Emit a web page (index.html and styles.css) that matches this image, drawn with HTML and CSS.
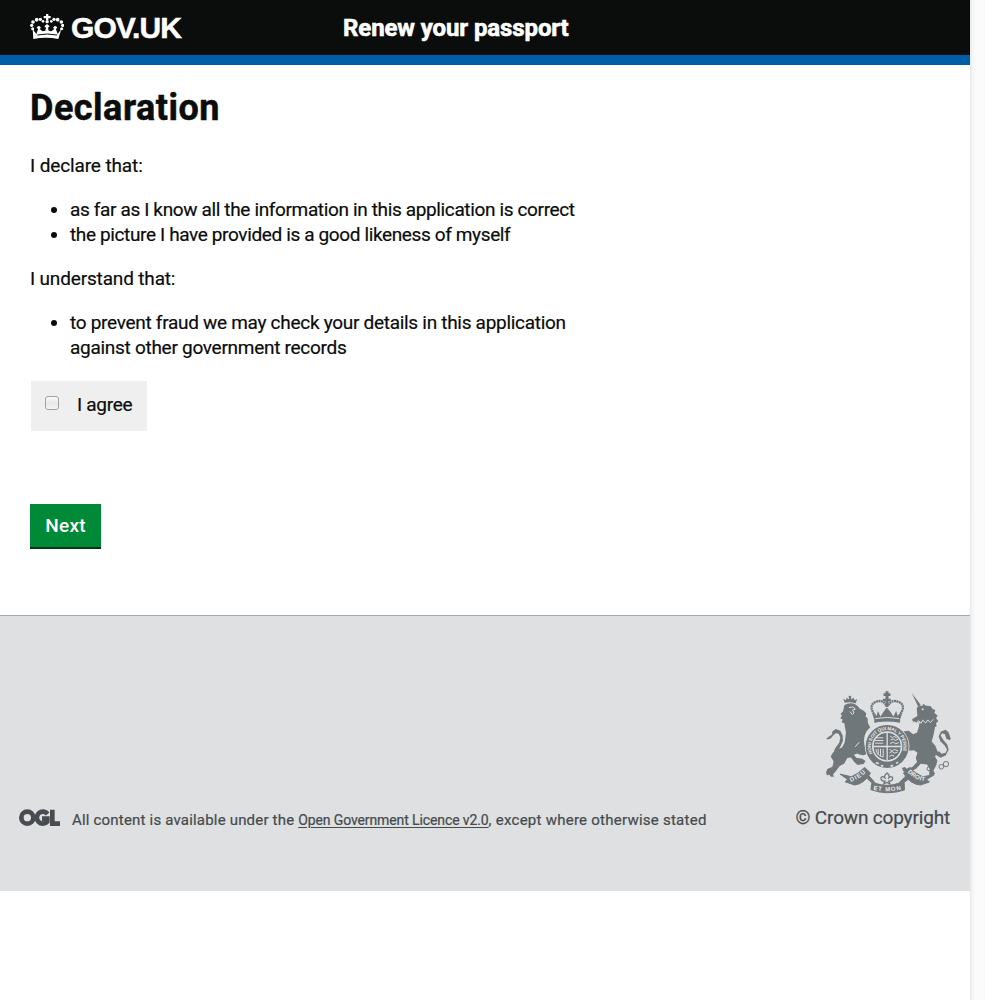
FILE: index.html
```html
<!DOCTYPE html>
<html lang="en">
<head>
<meta charset="utf-8">
<title>Declaration - Renew your passport - GOV.UK</title>
<link rel="stylesheet" href="styles.css">
</head>
<body>
<div class="window">
<div class="page">
  <header class="header">
    <a class="logo" href="#">
      <svg class="crown" viewBox="0 0 102 78" width="34" height="26" aria-hidden="true">
        <g fill="#fff">
          <path d="M48 0h7v6h7v7h-7v6h-7v-6h-7V6h7z"/>
          <circle cx="51.500" cy="23" r="5"/>
          <circle cx="20" cy="17" r="5.500"/><circle cx="31" cy="16" r="5"/><circle cx="39" cy="22" r="4"/>
          <circle cx="9" cy="24" r="5.500"/><circle cx="5" cy="34" r="5"/><circle cx="8" cy="44" r="4.500"/>
          <circle cx="83" cy="17" r="5.500"/><circle cx="72" cy="16" r="5"/><circle cx="64" cy="22" r="4"/>
          <circle cx="94" cy="24" r="5.500"/><circle cx="98" cy="34" r="5"/><circle cx="95" cy="44" r="4.500"/>
          <path d="M8 45l11 15 5-14-4-6 7-5 6 6-4 4 9 7 8-2 2-9-5-4 8-7 8 7-5 4 2 9 8 2 9-7-4-4 6-6 7 5-4 6 5 14 11-15-9 30q-38-8-75 0z"/>
        </g>
        <path d="M22 63q30-6 59 0" fill="none" stroke="#0b0c0c" stroke-width="3"/>
      </svg>
      <span class="wordmark">GOV.UK</span>
    </a>
    <span class="service">Renew your passport</span>
  </header>
  <main class="content">
    <h1 class="title">Declaration</h1>
    <p class="lead declare">I declare that:</p>
    <ul class="list">
      <li><span class="line l1">as far as I know all the information in this application is correct</span></li>
      <li><span class="line l2">the picture I have provided is a good likeness of myself</span></li>
    </ul>
    <p class="lead understand">I understand that:</p>
    <ul class="list">
      <li><span class="line l3">to prevent fraud we may check your details in this application</span><br><span class="line l4">against other government records</span></li>
    </ul>
    <label class="agree"><input class="box" type="checkbox"><span>I agree</span></label>
    <button class="next" type="button">Next</button>
  </main>
  <footer class="footer">
    <div class="licence">
      <svg class="ogl" viewBox="0 0 123 51" width="41" height="17" role="img" aria-label="OGL">
        <g fill="none" stroke="#484c50" stroke-width="14">
          <circle cx="25" cy="26" r="18"/>
          <path d="M86 15A18 18 0 1 0 85 38V29H69"/>
          <path d="M100 2v42h23"/>
        </g>
      </svg>
      <p class="terms"><span class="t1">All content is available under the </span><a href="#">Open Government Licence v2.0</a><span class="t3">, except where otherwise stated</span></p>
    </div>
    <div class="copyright">
      <svg class="crest" viewBox="30 33 380 310" width="127" height="103" aria-hidden="true">
        <defs>
          <path id="garter" d="M172 221A49 49 0 1 1 260 221"/>
          <path id="dieu" d="M106 307Q132 298 153 277"/>
          <path id="mon" d="M174 330Q216 339 260 330"/>
          <path id="droit" d="M277 277Q300 302 332 305"/>
        </defs>
        <g fill="#6f777b" stroke="none">
          <!-- lion -->
          <path d="M88 68l-4-12 8 5 2-8 6 5 4-7 5 7 6-5 3 8 8-4-5 13q-16-5-33-2z"/>
          <circle cx="104" cy="51" r="4"/>
          <path d="M87 76q10-8 30-5l10 7 6 8 11 6 9 8-2 10 6 4 1 15 7 14q-15 12-18 31-3 26 10 46l-11 6q-14 0-20-5l-10 4 7 9 18 3 10 7-6 9-18 3-10-9-10-14-11 2-9 16-14 8-10 13-10 12 3 7h-9l-6-7-6 3-3-9 4-10 15-7 4-16-9-15 7-12 13-9 14-6 8-14 4-30-5-29-8-2 3-9-7-3 5-10-5-4 8-7z"/>
          <path d="M33 176l17-12 1-9 10-8 14 6 7 14 1 16-8 18-8 14q0 14 11 13l12-10 7 8-12 14-16 4-12-8-3-14 5-16 13-18 3-15-5-11-9-2-7 6-8 10-10 3z"/>
          <!-- unicorn -->
          <path d="M290 39l27 36-8 5z"/>
          <path d="M305 84l7-7 9 1 5-7 5 6 16 2 6 8 8 3-3 9 10 8-5 7 7 10-7 5 2 10-5 2-4 22-6 22 11 13 7 18-8 14 7 12-3 14-9 17 5 9-8 8-10-6 2-16-8-14-19-2-14 15-20 10-18-2-5-10 9-3 6 5 17-5 14-15-4-12 5-16-10-8-20 2-11-10 14-2-4-11-17-5-8-17 13-13 17-2 13 10 12-5 5-16 2-11 3-8-11 6-11-3-3-8 16-10z"/>
          <path d="M405 181l-11-4-4-14-8-3-5 7 9 15 11 12 4 16-9 17-15 7-13-8-4-8 12-4 8 8 12-3 4-10-7-12-13-13-5-15 7-14 14-5 9 8 6 18z"/>
          <!-- crown -->
          <path d="M211 34h9v6h6v8h-6v8h7v8h-7v17h-9V64h-8v-8h8v-8h-6v-8h6zM171 101l13 8 4-16 8 17 10-16 9-11 10 12 10 15 8-17 5 16 13-8-9 26q-35-8-72 0z"/>
        </g>
        <!-- scrolls -->
        <g fill="#6f777b" stroke="#6f777b" stroke-width="3" stroke-linejoin="round">
          <path d="M74 283l34 8q22-9 40-28l18 17q-20 33-48 36l-29-10 8-7z"/>
          <path d="M357 285l-34 6q-22-9-40-28l-18 17q20 34 51 36l27-9-8-8z"/>
          <path d="M159 286l22 25q34 12 69 0l25-25 4 13-12 9 1 23q-52 17-101-1l3-21-13-11z"/>
        </g>
        <g fill="none" stroke="#6f777b">
          <path d="M181 109Q157 77 181 66Q204 57 213 77M251 109Q276 77 251 66Q228 57 219 77" stroke-width="7" stroke-dasharray="6 1.500"/>
          <path d="M177 125q40-7 78 0" stroke-width="7"/>
          <circle cx="344" cy="244" r="6" stroke-width="3"/><circle cx="352" cy="257" r="6" stroke-width="3"/><circle cx="342" cy="267" r="6" stroke-width="3"/><circle cx="379" cy="261" r="7" stroke-width="3"/><circle cx="393" cy="253" r="8" stroke-width="3"/>
        </g>
        <circle cx="216" cy="200" r="67" fill="#dee0e2"/>
        <circle cx="216" cy="200" r="55" fill="none" stroke="#6f777b" stroke-width="19"/>
        <circle cx="216" cy="200" r="42" fill="#6f777b"/>
        <g fill="none" stroke="#dee0e2" stroke-width="3">
          <circle cx="216" cy="200" r="43"/>
          <path d="M216 158v83M174 200h84" stroke-width="4"/>
          <path d="M184 174h20M180 182h25M180 190h24M225 169l7 5 5-5 8 6M226 181l8-4 6 5 9-4M225 191l9-4 8 5 9-4M182 208q4 20 22 24M189 207v18M196 207v22M204 207v25M223 209l8 5 6-5 12 4M223 219l8-4 6 5 10-3M222 230l8-4 7 3"/>
          <path d="M182 248l9 4M197 257l7 2M226 259l8-2M243 251l6-4" stroke-width="5"/>
          <path d="M101 83l13-2 6 7-8 2 4 9-5 5-7-9M296 125l10 5 4-8 8 8 5-9 9 8 6-9 8 8 9-10M132 187l-12 14" />
          <path d="M180 116q36-7 72 0"/>
        </g>
        <circle cx="323" cy="88" r="3" fill="#dee0e2"/>
        <path d="M216 280q11 10 3 17 5-9 12-5 4 4 0 9-4 4-10 3l3 8-9-4-9 4 3-8q-6 1-10-3-4-5 0-9 7-4 12 5-8-7 5-17z" fill="#dee0e2" stroke="#6f777b" stroke-width="4"/>
        <g class="motto" fill="#eceeef">
          <text><textPath href="#garter" textLength="190">HONI SOIT QUI MAL Y PENSE</textPath></text>
          <text class="scroll"><textPath href="#dieu" textLength="54">DIEU</textPath></text>
          <text class="scroll"><textPath href="#mon" textLength="84">ET MON</textPath></text>
          <text class="scroll"><textPath href="#droit" textLength="60">DROIT</textPath></text>
        </g>
      </svg>
      <a class="crown-link" href="#">© Crown copyright</a>
    </div>
  </footer>
</div>
<div class="scroll-track"></div>
</div>
</body>
</html>
```
FILE: styles.css
```css
* { box-sizing: border-box; }
body { margin: 0; background: #fff; color: #0b0c0c; font-family: Roboto, "Liberation Sans", sans-serif; font-size: 19px; line-height: 25px; }
.window { display: flex; height: 1000px; overflow: hidden; }
.page { width: 970px; }
.scroll-track { width: 15px; background: linear-gradient(90deg, #e6e6e6 0, #f3f3f3 2px, #fafafa 5px, #fcfcfc 13px, #f6f6f6); }
.header { display: flex; height: 65px; background: #0b0c0c; border-bottom: 10px solid #005ea5; padding-left: 30px; }
.logo { display: flex; width: 313px; color: #fff; text-decoration: none; padding-top: 14px; }
.crown { margin-right: 7px; flex: none; }
.wordmark { font: bold 30px/28px "Liberation Sans", sans-serif; letter-spacing: -0.95px; -webkit-text-stroke: 0.5px #fff; }
.service { color: #fff; font-size: 24px; font-weight: 700; line-height: 30px; padding-top: 13px; letter-spacing: -0.1px; white-space: nowrap; -webkit-text-stroke: 0.6px #fff; }
.content { padding: 0 30px; height: 550px; display: flex; flex-direction: column; align-items: flex-start; }
.title { margin: 23px 0 0; font-size: 36px; line-height: 40px; font-weight: 700; letter-spacing: 0.5px; -webkit-text-stroke: 0.5px #0b0c0c; }
.lead { margin: 25px 0 0; }
.declare { letter-spacing: -0.12px; }
.understand { margin-top: 19px; letter-spacing: -0.16px; }
.list { margin: 19px 0 0; padding: 0 0 0 40px; white-space: nowrap; }
.lead, .line, .agree span { -webkit-text-stroke: 0.2px #0b0c0c; }
.l1 { letter-spacing: -0.36px; }
.l2 { letter-spacing: -0.37px; }
.l3 { letter-spacing: -0.29px; }
.l4 { letter-spacing: -0.28px; }
.agree { display: flex; align-items: flex-start; margin: 21px 0 0 1px; width: 116px; height: 50px; background: #efefef; padding: 11px 0 0 14px; letter-spacing: -0.3px; }
.box { appearance: none; width: 14px; height: 14px; margin: 4px 18px 0 0; border: 1px solid #a2a2a2; border-radius: 3px; background: linear-gradient(#fafafa, #e8e8e8 50%, #f4f4f4); flex: none; }
.next { margin: 73px 0 0; width: 71px; height: 45px; border: 0; border-bottom: 2px solid #003618; background: #008a37; color: #fff; font: 500 19px/25px Roboto, sans-serif; letter-spacing: 0.2px; padding: 0; }
.footer { height: 276px; border-top: 1px solid #a1acb2; background: #dee0e2; color: #454a4c; display: flex; justify-content: space-between; padding: 75px 20px 0 19px; }
.licence { display: flex; margin-top: 118px; }
.ogl { margin-right: 12px; }
.terms { margin: 0; font-size: 15px; line-height: 22px; white-space: nowrap; -webkit-text-stroke: 0.2px #454a4c; }
.terms a { font-size: 14px; color: inherit; text-underline-offset: 2px; letter-spacing: -0.11px; }
.t1 { letter-spacing: 0.19px; }
.t3 { letter-spacing: 0.25px; }
.copyright { display: flex; flex-direction: column; align-items: flex-end; }
.crest { margin-right: -2px; }
.crown-link { color: inherit; text-decoration: none; margin-top: 11px; white-space: nowrap; letter-spacing: -0.17px; -webkit-text-stroke: 0.2px #454a4c; }
.motto text { font: bold 14px "Liberation Sans", sans-serif; }
.motto .scroll { font-size: 18px; }
```
